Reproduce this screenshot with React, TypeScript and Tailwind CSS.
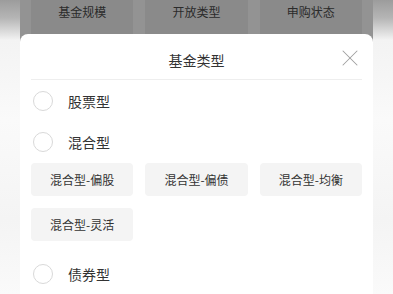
import { X } from "lucide-react";

const font = { fontFamily: '"Noto Sans CJK SC", "Noto Sans", sans-serif' };

const topTabs = ["基金规模", "开放类型", "申购状态"];
const mixedChips = ["混合型-偏股", "混合型-偏债", "混合型-均衡", "混合型-灵活"];

function Radio({ label }: { label: string }) {
  return (
    <div className="flex h-[41px] items-center">
      <span className="ml-[2px] h-[20px] w-[20px] rounded-full border border-[#d9d9d9] bg-white" />
      <span className="ml-[15px] text-[14px] leading-none text-[#333]">{label}</span>
    </div>
  );
}

function SideStrip() {
  return (
    <div className="w-[20px] shrink-0 bg-[linear-gradient(to_bottom,#9c9c9c_0px,#b5b5b5_18px,#f3f3f3_40px,#fafafa_120px,#f4f4f4_220px,#fafafa_294px)]" />
  );
}

export default function App() {
  return (
    <div className="flex h-[294px] w-[393px] overflow-hidden bg-[#fafafa]" style={font}>
      <SideStrip />

      <div className="flex w-[353px] shrink-0 flex-col bg-[#939393]">
        {/* dimmed filter tabs behind the sheet */}
        <div className="grid h-[34px] shrink-0 grid-cols-3 gap-3 px-[11px]">
          {topTabs.map((t) => (
            <div key={t} className="flex items-start justify-center bg-[#8a8a8a] pt-[4px]">
              <span className="text-[12px] leading-[16px] text-[#2b2b2b]">{t}</span>
            </div>
          ))}
        </div>

        {/* bottom sheet */}
        <div className="relative flex-1 rounded-t-[8px] bg-white px-[11px]">
          <div className="flex h-[46px] items-center justify-center border-b border-[#eeeeee]">
            <span className="mt-[6px] text-[14px] leading-none text-[#333]">基金类型</span>
          </div>
          <button className="absolute right-[9px] top-[10px] text-[#a0a0a0]">
            <X size={28} strokeWidth={0.9} />
          </button>

          <Radio label="股票型" />
          <Radio label="混合型" />

          <div className="mt-[1px] grid grid-cols-3 gap-3">
            {mixedChips.map((c) => (
              <div
                key={c}
                className="flex h-[33px] items-center justify-center rounded-[4px] bg-[#f4f4f4] text-[12px] text-[#333]"
              >
                {c}
              </div>
            ))}
          </div>

          <div className="mt-[12px]">
            <Radio label="债券型" />
          </div>
        </div>
      </div>

      <SideStrip />
    </div>
  );
}
